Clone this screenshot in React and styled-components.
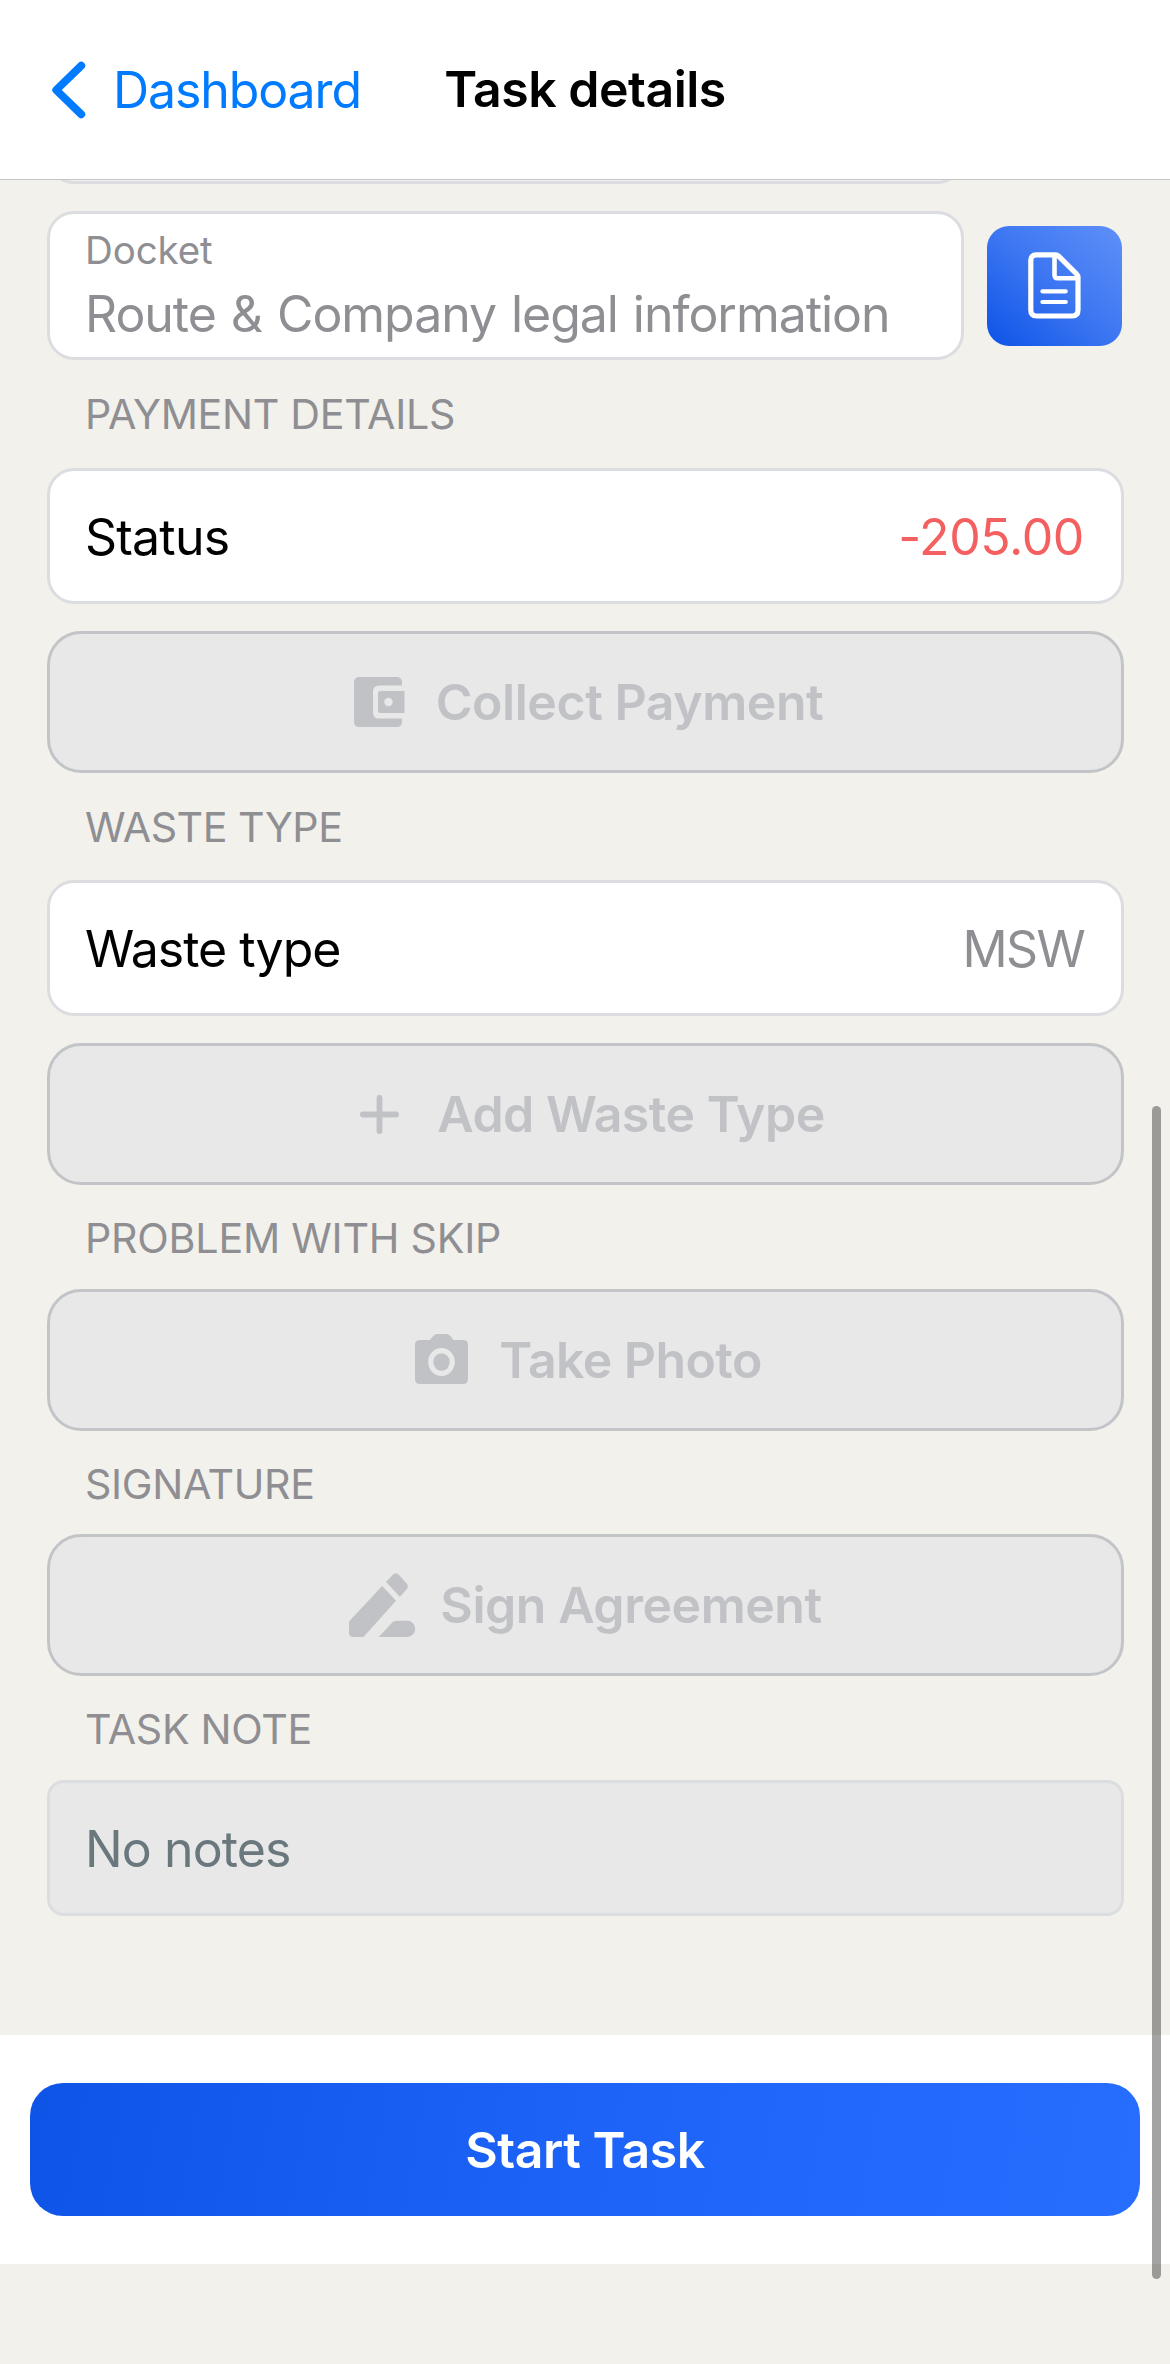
import React from "react";
import styled, { createGlobalStyle } from "styled-components";

const GlobalStyle = createGlobalStyle`
  html, body { margin: 0; padding: 0; background: #f2f1eb; }
  * { box-sizing: border-box; }
`;

const Screen = styled.div`
  position: relative;
  width: 1170px;
  height: 2364px;
  overflow: hidden;
  display: flex;
  flex-direction: column;
  background: #f2f1eb;
  font-family: Inter, "Liberation Sans", sans-serif;
  font-size: 50px;
  line-height: 60px;
  color: #000;
`;

const Header = styled.header`
  flex: none;
  height: 180px;
  display: grid;
  grid-template-columns: 1fr auto 1fr;
  align-items: center;
  padding: 0 51px;
  background: #fff;
  border-bottom: 1px solid #c5c5c9;
`;

const BackLink = styled.a`
  display: flex;
  align-items: center;
  gap: 26px;
  color: #007aff;
  letter-spacing: ${(p) => p.$track}px;
`;

const Title = styled.h1`
  margin: 0;
  padding-bottom: 2px;
  font-size: 50px;
  font-weight: 600;
  letter-spacing: ${(p) => p.$track}px;
`;

const Content = styled.main`
  flex: none;
  height: 1855px;
  display: flex;
  flex-direction: column;
  padding: 0 46px 0 47px;
`;

const CardTail = styled.div`
  flex: none;
  width: 917px;
  height: 60px;
  margin-top: -56px;
  border: 3px solid #dcdde0;
  border-radius: 27px;
  clip-path: inset(56px 0 0 0);
`;

const DocketRow = styled.div`
  flex: none;
  display: flex;
  align-items: center;
  gap: 23px;
  margin-top: 27px;
`;

const Card = styled.div`
  flex: none;
  display: flex;
  align-items: center;
  justify-content: space-between;
  height: 136px;
  padding: 2px 37px 0 35px;
  border: 3px solid #dcdde0;
  border-radius: ${(p) => (p.$muted ? 17 : 27)}px;
  background: ${(p) => (p.$muted ? "#e8e8e8" : "#fff")};
`;

const DocketCard = styled(Card)`
  width: 917px;
  height: 149px;
  flex-direction: column;
  align-items: flex-start;
  justify-content: flex-start;
  padding-top: 11px;
  color: #8e8e93;
`;

const DocketLabel = styled.div`
  font-size: 38.5px;
  line-height: 50px;
  letter-spacing: ${(p) => p.$track}px;
`;

const Text = styled.span`
  color: ${(p) => p.$color || "inherit"};
  letter-spacing: ${(p) => p.$track || 0}px;
  white-space: nowrap;
`;

const DocketValue = styled(Text)`
  margin-top: 9px;
  word-spacing: 2px;
`;

const FileButton = styled.button`
  flex: none;
  width: 135px;
  height: 120px;
  display: flex;
  align-items: center;
  justify-content: center;
  padding: 0;
  border: 0;
  border-radius: 22px;
  background: linear-gradient(to top right, #0d53e8, #3c76f1 50%, #5f90f9);
`;

const SectionLabel = styled.h2`
  flex: none;
  display: flex;
  align-items: center;
  height: ${(p) => p.$height}px;
  margin: 0;
  padding: ${(p) => p.$drop || 0}px 0 0 38px;
  font-size: 41.2px;
  font-weight: 400;
  line-height: 50px;
  color: #8e8e93;
  letter-spacing: ${(p) => p.$track}px;
`;

const ActionButton = styled.button`
  flex: none;
  display: flex;
  align-items: center;
  justify-content: center;
  gap: ${(p) => p.$gap}px;
  height: 142px;
  margin: ${(p) => (p.$spaced ? 27 : 0)}px 0 0;
  padding: 0 0 0 ${(p) => p.$inset || 0}px;
  border: 3px solid #c3c4c8;
  border-radius: 34px;
  background: #e8e8e8;
  color: #c1c2c6;
  font: inherit;
  font-weight: 600;
`;

const Icon = styled.svg`
  flex: none;
  display: block;
`;

const Footer = styled.footer`
  flex: none;
  height: 229px;
  display: flex;
  align-items: center;
  padding: 0 30px;
  background: #fff;
`;

const StartButton = styled.button`
  width: 100%;
  height: 133px;
  padding: 0;
  border: 0;
  border-radius: 33px;
  background: linear-gradient(100deg, #0e54e7, #1d63f8 50%, #276eff);
  color: #fff;
  font: inherit;
  font-weight: 600;
`;

const Scrollbar = styled.div`
  position: absolute;
  top: 1106px;
  right: 9px;
  width: 9px;
  height: 1173px;
  border-radius: 5px;
  background: rgba(0, 0, 0, 0.36);
`;

const ChevronIcon = () => (
  <Icon width="36" height="60" viewBox="0 0 36 60" fill="none" stroke="currentColor" strokeWidth="7.8" strokeLinecap="round" strokeLinejoin="round">
    <path d="M30.3 5.6 L5.2 30 L30.3 54.4" />
  </Icon>
);

const FileIcon = () => (
  <Icon width="53" height="67" viewBox="0 0 53 67" fill="none" stroke="#fff" strokeLinecap="round" strokeLinejoin="round">
    <path strokeWidth="5.2" d="M8.3 2.8 H27.5 Q29.3 2.8 30.6 4.1 L48.6 22 Q50 23.4 50 25.3 V58 Q50 64 44.3 64 H8.3 Q2.8 64 2.8 58 V8.5 Q2.8 2.8 8.3 2.8 Z" />
    <path strokeWidth="4.6" d="M26.5 3.5 V23 Q26.5 26.3 29.8 26.3 H49.5" />
    <path strokeWidth="4.2" d="M14.4 39.3 H37.8 M14.4 50 H37.8" />
  </Icon>
);

const WalletIcon = () => (
  <Icon width="51" height="50" viewBox="0 0 51 50" fill="currentColor">
    <path d="M5.5 0 H42.5 Q48 0 48 5.5 V8.5 H25 Q19 8.5 19 14.5 V35.5 Q19 41.5 25 41.5 H48 V44.5 Q48 50 42.5 50 H5.5 Q0 50 0 44.5 V5.5 Q0 0 5.5 0 Z" />
    <path fillRule="evenodd" d="M26.5 14 H50.5 V36 H26.5 Q24 36 24 33.5 V16.5 Q24 14 26.5 14 Z M34.5 20.8 A4.2 4.2 0 1 0 34.5 29.2 A4.2 4.2 0 1 0 34.5 20.8 Z" />
  </Icon>
);

const PlusIcon = () => (
  <Icon width="39" height="39" viewBox="0 0 39 39" fill="none" stroke="currentColor" strokeWidth="5.8" strokeLinecap="round">
    <path d="M19.5 2.9 V36.1 M2.9 19.5 H36.1" />
  </Icon>
);

const CameraIcon = () => (
  <Icon width="53" height="53" viewBox="0 0 53 53" fill="currentColor">
    <path fillRule="evenodd" d="M15 6 L18.2 2 Q19.8 0 22 0 H31.5 Q33.7 0 35.3 2 L38.5 6 H48 Q53 6 53 11 V45 Q53 50 48 50 H5 Q0 50 0 45 V11 Q0 6 5 6 Z M26.5 14 A13.3 14 0 1 0 26.5 42 A13.3 14 0 1 0 26.5 14 Z" />
    <ellipse cx="26.5" cy="28" rx="8.2" ry="8.8" />
  </Icon>
);

const SignIcon = () => (
  <Icon width="66" height="64" viewBox="0 0 66 64" fill="currentColor">
    <path d="M33.2 13 L47 27.8 L14.5 64 H4.5 Q0 64 0 59.5 V48.5 Z" />
    <path d="M37 9 L43.8 1.8 Q46.8 -1.2 49.8 1.8 L57.7 10.6 Q60 13.4 57.7 16.2 L50.9 23.8 Z" />
    <path d="M29.8 64 L43.5 49.2 Q45 47.7 47.2 47.7 H58 A8.1 8.1 0 0 1 58 64 Z" />
  </Icon>
);

export default function App() {
  return (
    <>
      <GlobalStyle />
      <Screen>
        <Header>
          <BackLink $track={-1.1}>
            <ChevronIcon />
            Dashboard
          </BackLink>
          <Title $track={-0.5}>Task details</Title>
        </Header>
        <Content>
          <CardTail />
          <DocketRow>
            <DocketCard>
              <DocketLabel $track={-0.1}>Docket</DocketLabel>
              <DocketValue $track={-1.05}>Route &amp; Company legal information</DocketValue>
            </DocketCard>
            <FileButton aria-label="Open docket">
              <FileIcon />
            </FileButton>
          </DocketRow>

          <SectionLabel $height={108} $track={-0.3}>PAYMENT DETAILS</SectionLabel>
          <Card>
            <Text $track={-0.8}>Status</Text>
            <Text $color="#f45f5f" $track={-0.4}>-205.00</Text>
          </Card>
          <ActionButton $spaced $gap={31} $inset={6} disabled>
            <WalletIcon />
            <Text $track={-0.45}>Collect Payment</Text>
          </ActionButton>

          <SectionLabel $height={107} $track={-0.5}>WASTE TYPE</SectionLabel>
          <Card>
            <Text $track={-1}>Waste type</Text>
            <Text $color="#8e8e93" $track={-1.7}>MSW</Text>
          </Card>
          <ActionButton $spaced $gap={38} $inset={14} disabled>
            <PlusIcon />
            <Text $track={-0.5}>Add Waste Type</Text>
          </ActionButton>

          <SectionLabel $height={104} $drop={1} $track={-0.23}>PROBLEM WITH SKIP</SectionLabel>
          <ActionButton $gap={31} $inset={6} disabled>
            <CameraIcon />
            <Text $track={-0.6}>Take Photo</Text>
          </ActionButton>

          <SectionLabel $height={103} $drop={2} $track={-0.33}>SIGNATURE</SectionLabel>
          <ActionButton $gap={25} disabled>
            <SignIcon />
            <Text $track={-0.45}>Sign Agreement</Text>
          </ActionButton>

          <SectionLabel $height={104} $drop={2} $track={-0.33}>TASK NOTE</SectionLabel>
          <Card $muted>
            <Text $color="#6a787e" $track={-0.9}>No notes</Text>
          </Card>
        </Content>
        <Footer>
          <StartButton>
            <Text $track={-0.45}>Start Task</Text>
          </StartButton>
        </Footer>
        <Scrollbar />
      </Screen>
    </>
  );
}
